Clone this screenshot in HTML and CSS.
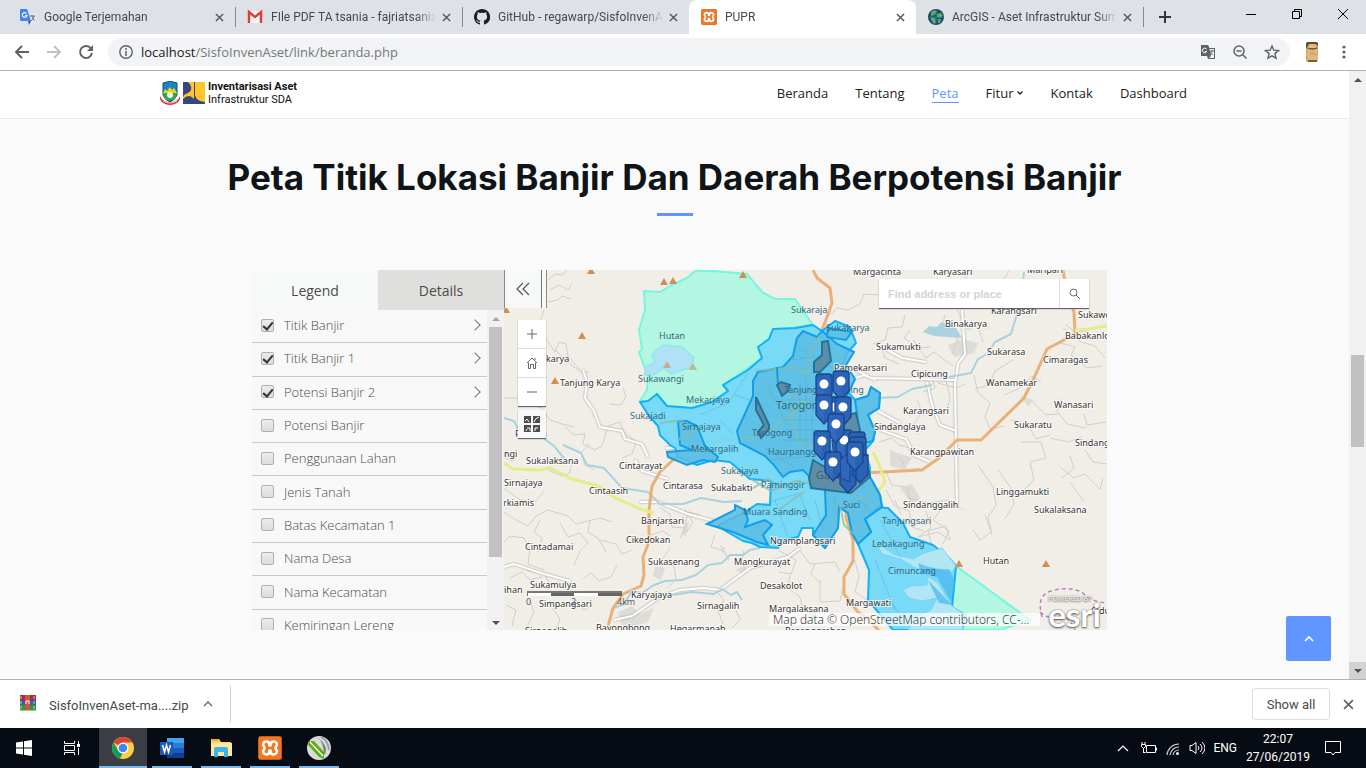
FILE: index.html
```html
<!DOCTYPE html>
<html lang="id">
<head>
<meta charset="utf-8">
<title>PUPR</title>
<link rel="stylesheet" href="styles.css">
</head>
<body>
<svg class="defs" aria-hidden="true">
  <defs>
    <symbol id="x" viewBox="0 0 10 10"><path d="M1 1l8 8M9 1L1 9" fill="none" stroke="currentColor" stroke-width="1.6"/></symbol>
    <symbol id="xampp" viewBox="0 0 24 24"><rect x=".5" y=".5" width="23" height="23" rx="2" fill="#f37623" stroke="#c85a14"/><path d="M8.500 5.500c-3 0-4.500 3-2.500 5q1 1.500 0 3c-2 2-.5 5 2.500 5s3-2 3-4h1c0 2 0 4 3 4s4.500-3 2.500-5q-1-1.500 0-3c2-2 .5-5-2.500-5s-3 2-3 4h-1c0-2 0-4-3-4z" fill="none" stroke="#fff" stroke-width="2.600" stroke-linejoin="round"/></symbol>
    <symbol id="translate" viewBox="0 0 16 16"><path d="M1 1h7l1.500 3H15v11H8l-1-3H1z" fill="#5f6368"/><path d="M9.500 5H14v9H9l2-2z" fill="#f1f3f4"/><path d="M6.500 5a2.300 2.300 0 1 0 .3 2.500H5" fill="none" stroke="#fff"/><path d="M10 7h4M12 6v1c0 2-1 3-2 4m0-3c1 2 2 2 3 3" fill="none" stroke="#5f6368" stroke-width=".9"/></symbol>
    <symbol id="pin" viewBox="0 0 18 32"><path d="M4 1h10q3 0 3 3v17l-8 9-8-9V4q0-3 3-3z" fill="#2a62b4" stroke="#1c448c" stroke-width="1.300"/><path d="M9 14v15l-7-8V5z" fill="#3b75c8" opacity=".45"/><circle cx="9" cy="11" r="4.500" fill="#fff"/></symbol>
    <symbol id="peak" viewBox="0 0 8 7"><path d="M4 0l4 7H0z" fill="#d08f55"/></symbol>
  </defs>
</svg>

<div class="window">
  <header class="tabstrip">
    <div class="tab">
      <svg class="tab-icon" viewBox="0 0 16 16"><path d="M6 4h9q1 0 1 1v10q0 1-1 1h-5z" fill="#e4e6e8"/><path d="M1 0h6l4 12H1q-1 0-1-1V1q0-1 1-1z" fill="#4285f4"/><path d="M8 12h3l-2 4z" fill="#2452b8"/><path d="M6.500 4.500a2.300 2.300 0 1 0 .4 2H5" fill="none" stroke="#fff" stroke-width="1.200"/><path d="M9.500 7H15M12 6v1c1 3 2 4 3 5m-1-5c0 2-2 4-3 5" fill="none" stroke="#697886"/></svg>
      <span class="tab-title">Google Terjemahan</span><button class="tab-close" aria-label="Tutup"><svg><use href="#x"/></svg></button>
    </div>
    <div class="tab sep">
      <svg class="tab-icon" viewBox="0 0 16 16"><path d="M1 2h14v12H1z" fill="#f3f3f3"/><path d="M2 14V3l6 5 6-5v11" fill="none" stroke="#d93f32" stroke-width="2.400"/></svg>
      <span class="tab-title">FIle PDF TA tsania - fajriatsania</span><button class="tab-close" aria-label="Tutup"><svg><use href="#x"/></svg></button>
    </div>
    <div class="tab sep">
      <svg class="tab-icon" viewBox="0 0 16 16"><path d="M8 0C3.600 0 0 3.600 0 8c0 3.500 2.300 6.500 5.500 7.600.4.100.5-.2.500-.4v-1.500c-2.200.5-2.700-.9-2.700-.9-.4-.9-.9-1.200-.9-1.200-.7-.5.100-.5.100-.5.800.1 1.200.8 1.200.8.700 1.200 1.900.9 2.300.7.100-.5.300-.9.500-1.100-1.800-.2-3.600-.9-3.600-4 0-.9.300-1.600.8-2.100-.1-.2-.4-1 .1-2.100 0 0 .7-.2 2.200.8a7.700 7.700 0 0 1 4 0c1.500-1 2.200-.8 2.200-.8.400 1.100.200 1.900.1 2.100.5.600.8 1.300.8 2.100 0 3.100-1.900 3.800-3.700 4 .3.300.6.800.6 1.500v2.200c0 .2.100.5.600.4A8 8 0 0 0 8 0z" fill="#1b1f23"/></svg>
      <span class="tab-title">GitHub - regawarp/SisfoInvenA</span><button class="tab-close" aria-label="Tutup"><svg><use href="#x"/></svg></button>
    </div>
    <div class="tab active">
      <svg class="tab-icon"><use href="#xampp"/></svg>
      <span class="tab-title">PUPR</span><button class="tab-close" aria-label="Tutup"><svg><use href="#x"/></svg></button>
    </div>
    <div class="tab">
      <svg class="tab-icon" viewBox="0 0 16 16"><circle cx="8" cy="8" r="8" fill="#164b6c"/><path d="M3 3l4-2 2 2-3 3-3 1zM9 5l4-1 2 3-3 2-3-1zM3 8l4 1 1 4-2 2-3-4zM10 10l3 0-1 4-2 0z" fill="#69b343"/><path d="M1 8h14M8 1v14M3 4q5 3 10 0M3 12q5-3 10 0" fill="none" stroke="#2e87c2" stroke-width=".7"/></svg>
      <span class="tab-title">ArcGIS - Aset Infrastruktur Sum</span><button class="tab-close" aria-label="Tutup"><svg><use href="#x"/></svg></button>
    </div>
    <button class="new-tab sep" aria-label="Tab baru"><svg viewBox="0 0 12 12"><path d="M6 0v12M0 6h12" stroke="#333639" stroke-width="2"/></svg></button>
    <div class="controls">
      <button aria-label="Minimalkan"><svg viewBox="0 0 12 12"><path d="M1 6.500h10" stroke="#000"/></svg></button>
      <button aria-label="Pulihkan"><svg viewBox="0 0 12 12"><path d="M1.500 3.500h7v7h-7zM3.500 3.500v-2h7v7h-2" fill="none" stroke="#000"/></svg></button>
      <button aria-label="Tutup jendela"><svg viewBox="0 0 12 12"><path d="M1 1l10 10M11 1L1 11" stroke="#000"/></svg></button>
    </div>
  </header>

  <div class="toolbar">
    <button class="tool" aria-label="Kembali"><svg viewBox="0 0 16 16"><path d="M15 8H2M8 2L2 8l6 6" fill="none" stroke="#5f6368" stroke-width="2"/></svg></button>
    <button class="tool" aria-label="Maju"><svg viewBox="0 0 16 16"><path d="M1 8h13M8 2l6 6-6 6" fill="none" stroke="#bfc1c4" stroke-width="2"/></svg></button>
    <button class="tool" aria-label="Muat ulang"><svg viewBox="0 0 16 16"><path d="M13 4.500A6 6 0 1 0 14 9" fill="none" stroke="#5f6368" stroke-width="2"/><path d="M15 1v6H9z" fill="#5f6368"/></svg></button>
    <div class="omnibox">
      <svg class="info" viewBox="0 0 14 14"><circle cx="7" cy="7" r="6.200" fill="none" stroke="#5f6368" stroke-width="1.400"/><path d="M7 6v5M7 3v2" stroke="#5f6368" stroke-width="1.500"/></svg>
      <span class="url"><b>localhost</b>/SisfoInvenAset/link/beranda.php</span>
      <svg class="omni-icon"><use href="#translate"/></svg>
      <svg class="omni-icon" viewBox="0 0 16 16"><circle cx="7" cy="7" r="5" fill="none" stroke="#5f6368" stroke-width="1.500"/><path d="M4.500 7h5M10.500 10.500l4 4" stroke="#5f6368" stroke-width="1.500"/></svg>
      <svg class="omni-icon" viewBox="0 0 16 16"><path d="M8 2l1.800 4.200 4.700.4-3.600 3 1.100 4.600L8 11.800l-4 2.400 1.100-4.600-3.600-3 4.700-.4z" fill="none" stroke="#5f6368" stroke-width="1.400"/></svg>
    </div>
    <svg class="avatar" viewBox="0 0 12 20"><path d="M0 0h12v20H0z" fill="#cfa869"/><path d="M0 0h12v4l-2-2-7 0-3 5z" fill="#5f4b2e"/><path d="M2 8q0-6 4-6t5 6l-1 4-4 3-4-3z" fill="#e3bd88"/><path d="M2 6q4 2 9 0" fill="none" stroke="#5b4030" stroke-width="1.300"/><path d="M3 7q3 6 6 1v5H4z" fill="#d9a077"/><path d="M0 10q5 8 12 2v7H2z" fill="#dcbd78"/><path d="M2 19h9" stroke="#7a5d33" stroke-width="2"/></svg>
    <button class="tool" aria-label="Menu"><svg viewBox="0 0 16 16"><g fill="#5f6368"><circle cx="8" cy="3" r="1.600"/><circle cx="8" cy="8" r="1.600"/><circle cx="8" cy="13" r="1.600"/></g></svg></button>
  </div>

  <div class="viewport">
    <main class="page">
      <div class="navbar">
        <div class="container">
          <a class="brand" href="#">
            <svg class="crest" viewBox="0 0 20 24"><path d="M3 2l4-1 3-1 3 1 4 1v12q-2 5-7 7-5-2-7-7z" fill="#1686c7" stroke="#124c6b"/><path d="M3 12h14l-3-5-2 2-2-3-3 4-2-2z" fill="#f2d21d"/><path d="M3 12h14q0 4-3 7H6q-3-3-3-7z" fill="#36a653"/><circle cx="10" cy="14" r="3" fill="#f6f2ce"/><path d="M0 15q2 6 10 6t10-6q1 4-3 7-7 4-14 0-4-3-3-7z" fill="#d5343b"/><path d="M3 20q7 4 14 0" fill="none" stroke="#fff" stroke-width=".8"/></svg>
            <svg class="pupr" viewBox="0 0 22 22"><path d="M0 0h22v22H0z" fill="#ffc629"/><path d="M0 0h5q7 7 0 11Q1 12 0 15zM11 0h1v13q1 6 10 7v2H11z" fill="#35477b"/><path d="M0 22v-5q6-6 11 0v5z" fill="#35477b"/></svg>
            <span class="brand-text"><b>Inventarisasi Aset</b><br>Infrastruktur SDA</span>
          </a>
          <nav>
            <a href="#">Beranda</a><a href="#">Tentang</a><a class="current" href="#">Peta</a><a href="#">Fitur<svg viewBox="0 0 6 6"><path d="M.5 1.500L3 4l2.500-2.500" fill="none" stroke="#222" stroke-width="1.300"/></svg></a><a href="#">Kontak</a><a href="#">Dashboard</a>
          </nav>
        </div>
      </div>

      <h1>Peta Titik Lokasi Banjir Dan Daerah Berpotensi Banjir</h1>

      <section class="mapapp">
        <aside class="legend">
          <div class="legend-tabs"><button class="on">Legend</button><button>Details</button></div>
          <div class="legend-body">
            <div class="layers">
              <label><input type="checkbox" checked>Titik Banjir<i></i></label>
              <label><input type="checkbox" checked>Titik Banjir 1<i></i></label>
              <label><input type="checkbox" checked>Potensi Banjir 2<i></i></label>
              <label><input type="checkbox">Potensi Banjir</label>
              <label><input type="checkbox">Penggunaan Lahan</label>
              <label><input type="checkbox">Jenis Tanah</label>
              <label><input type="checkbox">Batas Kecamatan 1</label>
              <label><input type="checkbox">Nama Desa</label>
              <label><input type="checkbox">Nama Kecamatan</label>
              <label><input type="checkbox">Kemiringan Lereng</label>
            </div>
            <div class="list-scroll"><svg viewBox="0 0 8 4"><path d="M0 4l4-4 4 4z" fill="#a3a3a3"/></svg><div class="list-thumb"></div><svg viewBox="0 0 8 4"><path d="M0 0l4 4 4-4z" fill="#505050"/></svg></div>
          </div>
        </aside>

        <div class="map">
          <svg class="canvas" viewBox="504 270 603 360" preserveAspectRatio="xMidYMid slice">
            <rect x="504" y="270" width="603" height="360" fill="#f1eee8"/>
            <g fill="#dedcd8">
              <path d="M618 612l14-6 8 8 14-6-6 14-14 4-10 8zM655 566l10 2-4 12-8-4zM684 525l5-4-2 12-6 2zM720 545l5 3-2 6zM890 450l22 8-8 12-14-4zM948 345l14-6 16 4-4 10-20 4zM1020 396l14 4-6 6zM900 488l12-4 8 14-8 6zM504 450l12 8-4 4-8-4zM735 570l12-6-2 10zM806 610l10-3 2 10-8 3z"/>
            </g>
            <g class="minor">
              <path d="M548 280l7-6 8 1 4-6M550 290l9-5 9 5 4-7M548 302l10-2 4-4 9 3M544 310l-4 12 3 12 12 18 4-10 7 2 2 12 12 14M556 350l8 9 10 8 7 5 8 0M504 398h12l14 7 12 3 8 12 12 4 12 3M565 427l9 8 11-1-2 10 12 6 7-4 6-20 12-4 4 10 12 10-4 12-10 4M609 404l12 1 5-9-3-8M548 470l14 6 8-3 2-12M589 444l-8 9 4 12 10 5"/>
              <path d="M504 488l16 12 16 1 8-10M504 512l12 8 12 6 8-10 12-6 20 6 8 8 24-6 12 4M504 542l6-6 14 2 6 12-2 14 16 6M540 520l-6 12 8 6-4 14M560 523l8 14 12-4 8 10-8 8-6 14M590 520l-2 12 10 6 8 14M600 540l16 4 6 10 10-4M617 565l-6 12-12 4-8-8-8 6M510 578l12-6 8 8 12-3M526 570l18 4 6 10M506 605l10 5-4 16M530 600l4 12-7 15M552 607l8 12-4 10M576 600l8 10 9-5"/>
              <path d="M651 535l12-4 7 5M660 508l10 6 2 13 14 1M670 548l-8 12 12 6 2 14-9 8M685 510l8 12-9 14M700 515l-12-3-4 18-4 8M715 535l-4 12 13 4 5 9M744 550l-2 10 8 8 20-3M736 610l4 10-8 8M716 591l8 9-6 11 5 13M778 550l18 10-5 14-12-2M800 551l10 13 25-2 5 10M790 575l-2 13 12 9 4 16M820 580l0 22 20-1 3-14M815 564l-4 10 8 8M854 558l5 18-4 16 12 8"/>
              <path d="M828 316l10-8 10 2 12-6 4-10 16 1M880 302l14 6 15-2M905 315l-3 12-14 1-3 12-12 4M910 330l-6 8 14 10 13-1M899 364l-14-6-3-8M913 340l13 18 8-6 19 14M945 315l-3 12 16 12-6 15M956 308l12 22 14-8 8 7M971 320l8 10 4 12M965 270l2 15 15 9 12-4M1010 270l-10 14-16 6-5 12M1013 295l7 12 12 3 10-4M1066 325l9 7 10-1 14 9M1049 348l12-5 14 4-4 8 16 13 15-2M1063 328l18 14 14 4 10 12"/>
              <path d="M930 372l5 16-12 4M938 383l18 5 9-4M945 377l5 20-3 13-16 5M974 375l4 18 12 10-5 14 5 12 14-3M1013 360l-18 11-6 14-14 4M1004 395l14-6 14-13 9 6M1033 402l13 13 12-1M1011 420l16 3 9 16 14-4M1061 399l-4 12 10 13 19 4M1084 414l3 11 19-3M1021 442l20 0 5 16-16 4 4 18-10 10M1050 438l18 4 14-5M1070 456l4 12-12 10M1085 450l8 12 14 2M882 424l16 6 13-3 8 8M879 442l13-4 7 7 14 4M900 458l7 12 13-2M917 400l5 12-10 15"/>
              <path d="M886 490l9 16 14 5 3 16 12 4M885 470l7 15 15 2 4 18M908 498l21 5 19-3 16 10M926 511l5 17-13 9 20-5 12 8-4-14-18 5 5 20M978 465l15 22 3 18-8 12 4 18M998 470l13 18 3 16-9 15M1060 467l14 11 11-4 15 15 3-10M1070 482l14 20M947 502l-14 18 16 11-6 13M985 515l6 17-11 8-7-10M872 540l13 12 15-5M895 500l6 15M900 548l14 12 20 6"/>
            </g>
            <g class="whiteroad">
              <path d="M583 370l4 12-2 16 9 13 6 16 22 4 3 8 17 5 6 13M504 567l10-3 30 10 26 7M640 502l18 0 30 12 29 8M635 460l7 11 26 8M614 620l18-4 28-19 20-7 24-2 16 2 30-22 38-11 12-9M666 448h18M962 310l3 44-7 10-3 20 2 124M880 346l22 12 24 4M856 370l15 8 50 1 34 1M850 380l14-5 12 5M927 382l5 23 8 20 17 6M880 430l26 9 8 16 16 7M878 411l22 12"/>
            </g>
            <path class="water-line" d="M563 445l18 8 6 12 17 3 18 20 26 4 12 12 23 0 18-6 23 4 18-1M504 418l10 3 8 16 20 0 12 9 13 16M760 548l-10 2-7 5-13 0-8 8-14 2-12 10-14 5-17 1-11 4-12 8-10-2-8 13-10 4M654 593l18 2 20-3 22 2 8-5 9 6 6-3 5 8M1024 272l-2 18 4 14-9 10-6 20-16 8-8 12-9 5-7 14-22 4M876 398l22-1 14-8 20-4"/>
            <path d="M923 332l6-6 8 1 4-5 15 6 6 10-28-2z" fill="#aad3df"/>
            <g class="orange"><path d="M813 270l4 8 13 10 2 15-5 14-7 18-8 12-3 22 0 24M1063 270l4 24 7 18 1 22-28 15-13 29-10 20-43 42h-24l-18 18-17 12-60 3M607 630l6-22 10-14 18-8 3-11-1-18 6-15v-32l3-24 8-14 26-24 18-4 18-4 22 0M846 493l0 24 7 23 0 21-9 16 0 17 14 18 10 7 14 15"/></g>
            <path class="yellow" d="M504 463l9 6 27 1 10-2 22 11 27 7 16 12 28 12 11 3M1107 326l-19 3-13 1M873 452l6 12 6 18-10 14-14 8"/>
            <g fill="none" stroke="#bd80bd" stroke-width="1.500" stroke-dasharray="4 3"><path d="M1042 617q-6-22 9-26 16-5 31 1 9 10 25 11M1040 612q12 10 25 5 6 4 10 13"/></g>

            <g class="greenzone">
              <path d="M644 291l16 1 12-7 15-7 8-7 18 0 34 3 15 18 13 7h20l18 26-5 0-13 4-22 0-4 10-11 8 4 11-39 27 5 6-16 11-20 6-25-2-10-12-9 7h-8l7-11 1-15-4-9-5-14 3-3-3-19 6-20z"/>
              <path d="M956 566l74 54-30 10h-38l3-15-13-8z"/>
            </g>
            <path d="M652 355l11-10 19 2 12 11-4 10-8 2-10 4-9-6-8 6-10 1v-8l10-4z" fill="#b1e1f5" stroke="#91e9ef" stroke-width="2"/>
            <g class="bluezone">
              <path d="M640 402l8-1 9-7 10 12 25 2 20-6 16-11-5-6 25-15 14-12-4-11 11-8 4-10 22-1 18-3 9 6 13-10 15 6 6 16-9 10-5 15v17l13 15 13-4 3-9 9 6-1 15-11 7 7 16-2 10-8 9 5 18v9l10 18 2 12-17 12 6 13-13 12-6-11-4-20-9-6-1 21-13 20-12-13v-7h-11l-4 9-10 2-7 2-3 7-18-1-8-4-9-2-26-15 28-14 12-8 13 1 1-24-21-2-20-17-17-2-16 5-19-8-3-9-5-3-10-10-2-9-9-10z"/>
              <path d="M878 507l10 1 15 15 7 14 23 8 15 12 8 9-4 41 13 8-3 15h-69l-25-30 1-30-11-26 13-12-6-13z"/>
            </g>
            <g fill="#b2e6f5" stroke="#77d6f5"><path d="M876 542l17 12 20 5 11-6 18-5 14 18-4 6-34-3-18-10-18-5zM903 590l8-4 16-1 1-9 10 7 14 23 13 9-3 15h-54l10-14 13-6 6-12-15 3-13-3z"/></g>
            <g fill="#47b5ee" opacity=".7"><path d="M918 563q15 7 31 6l6 13-4 20-14-25-16-4zM928 580l24 25-13-2z"/></g>
            <g class="darkzone">
              <path d="M822 331l-5 6-14-6-6 7-4 18-10 11-25 5-5 9v15l-16 35 3 12 25 13 8 8 10 13 7-5 13-2 7 7 58 0-2-17-12-25-9-35 10-21-9-14 8-13-17-8z"/>
              <path d="M678 421h9l10 5 8 20 13 11-3 5-12-2-16 5-19-8-1-5 25-2-12-5zM707 524l28-14 0-5 10 5 3 10-3 7 20-7 7 5-9 10 5 10-11-3-24-10zM825 490l45-13 10 18 2 12-17 12 6 13-13 12-6-11-4-20-9-6-1 21-13 20-12-13 13-20zM828 328l24 4-6 8-19-3zM855 400l13-4 3-9 9 6-1 15-11 7 7 16-2 10-12 3z"/>
            </g>
            <g class="cityroad"><path d="M755 371l40-4 8 5 9 0M741 437h20l25-19 14-11 10 3M775 375l12 10 4 12M810 403l-15-4-4 20 8 22 15 6M750 490l18-11 13 8M751 479l20 12 25-10 19 3M780 509l25-18M840 505l4 20 10 9M849 493l20 8M678 440l22-13M660 423l24-3M820 335l-10 20-4 16"/></g>
            <g class="cityblock"><path d="M800 380v60M806 376v70M812 390v55M785 392h35M788 400h34M783 410h35M780 420h38M785 430h36M780 440h40M770 460l45-4M765 448l30 20M795 345l14 10M790 360l24-3M765 380l20 40M700 415l28-12M728 403l20-30M735 395l15 5M760 505l40-12M775 500l12 35M800 495l10 25M815 500l8 30M835 495v10M856 495l12 14M880 520l22 40M875 560l20 50M890 600l16 25M720 420l14 15"/></g>
            <path d="M777 367l1 18" fill="none" stroke="#129be8" stroke-width="2"/>
            <g class="grayzone"><path d="M822 342l6-1 3 20-11 11h-6v-10l8-7zM777 385l4-3 9 3-2 6-6 5zM756 397l13 28v4l-8 9-3-6 6-7-8-15zM856 413l4 17-8 12-10-10 5-17zM813 460l17 10 38-2 2 9-19 16-40-5-2-10z"/></g>

            <g>
              <use href="#peak" x="587" y="267" width="8" height="7"/><use href="#peak" x="660" y="278" width="8" height="7"/><use href="#peak" x="669" y="277" width="8" height="7"/><use href="#peak" x="739" y="271" width="8" height="7"/><use href="#peak" x="578" y="332" width="8" height="7"/><use href="#peak" x="551" y="377" width="8" height="7"/><use class="faded" href="#peak" x="663" y="361" width="8" height="7"/><use class="faded" href="#peak" x="689" y="363" width="8" height="7"/><use href="#peak" x="502" y="306" width="8" height="7"/><use href="#peak" x="955" y="560" width="8" height="7"/><use href="#peak" x="1042" y="560" width="8" height="7"/>
            </g>

            <g class="place">
              <text x="853" y="275">Margacinta</text><text x="933" y="275">Karyasari</text><text x="1027" y="273">Maripari</text>
              <text x="991" y="314">Karangsari</text><text x="1078" y="318">Sukawening</text><text x="945" y="327">Binakarya</text><text x="1065" y="339">Babakanloa</text>
              <text x="876" y="350">Sukamukti</text><text x="987" y="355">Sukarasa</text><text x="1043" y="363">Cimaragas</text><text x="911" y="377">Cipicung</text><text x="986" y="386">Wanamekar</text><text x="1054" y="408">Wanasari</text>
              <text x="903" y="414">Karangsari</text><text x="874" y="430">Sindanglaya</text><text x="1014" y="428">Sukaratu</text><text x="1075" y="446">Sindangsari</text><text x="910" y="455">Karangpawitan</text>
              <text x="996" y="495">Linggamukti</text><text x="1034" y="513">Sukalaksana</text><text x="903" y="508">Sindanggalih</text><text x="983" y="564">Hutan</text><text x="1091" y="614">Cidugaleun</text>
              <text x="834" y="371">Pamekarsari</text><text x="546" y="362">karya</text><text x="560" y="386">Tanjung Karya</text>
              <text x="515" y="437">Padaan</text><text x="504" y="457">ngi</text><text x="526" y="464">Sukalaksana</text><text x="504" y="486">Sirnajaya</text><text x="503" y="506">rkiamis</text><text x="619" y="469">Cintarayat</text><text x="589" y="494">Cintaasih</text><text x="663" y="489">Cintarasa</text><text x="711" y="491">Sukabakti</text><text x="641" y="524">Banjarsari</text><text x="626" y="543">Cikedokan</text><text x="525" y="550">Cintadamai</text><text x="648" y="565">Sukasenang</text><text x="734" y="565">Mangkurayat</text><text x="760" y="589">Desakolot</text><text x="530" y="588">Sukamulya</text><text x="504" y="593">ihan</text><text x="539" y="607">Simpangsari</text><text x="631" y="598">Karyajaya</text><text x="697" y="609">Sirnagalih</text><text x="769" y="612">Margalaksana</text><text x="596" y="631">Bayongbong</text><text x="670" y="632">Hegarmanah</text><text x="525" y="634">Sirnagalih</text><text x="785" y="634">Pasanggrahan</text>
              <text x="770" y="544">Ngamplangsari</text><text x="846" y="606">Margawati</text>
            </g>
            <g class="place dim">
              <text x="659" y="339">Hutan</text><text x="638" y="382">Sukawangi</text><text x="630" y="419">Sukajadi</text><text x="791" y="313">Sukaraja</text><text x="826" y="331">Sukakarya</text><text x="686" y="403">Mekarjaya</text><text x="682" y="430">Sirnajaya</text><text x="691" y="452">Mekargalih</text><text x="752" y="436">Tarogong</text><text x="768" y="455">Haurpanggung</text><text x="784" y="393">Tanjung Kamuning</text><text x="721" y="474">Sukajaya</text><text x="761" y="488">Paminggir</text><text x="743" y="515">Muara Sanding</text><text x="843" y="508">Suci</text><text x="882" y="524">Tanjungsari</text><text x="872" y="547">Lebakagung</text><text x="888" y="574">Cimuncang</text>
              <text class="city" x="776" y="409">Tarogong</text><text class="city" x="816" y="479">Garut</text>
            </g>

            <g>
              <use href="#pin" x="815" y="373" width="18" height="32"/><use href="#pin" x="832" y="370" width="18" height="32"/>
              <use href="#pin" x="826" y="396" width="18" height="32"/><use href="#pin" x="815" y="394" width="18" height="32"/><use href="#pin" x="834" y="396" width="18" height="32"/>
              <path d="M832 440l12 8 2 26-10 4z" fill="#2a62b4" stroke="#1c448c"/>
              <use href="#pin" x="835" y="429" width="18" height="32"/><use href="#pin" x="827" y="413" width="18" height="32"/><use href="#pin" x="813" y="430" width="18" height="32"/><use href="#pin" x="848" y="431" width="18" height="32"/><use href="#pin" x="849" y="436" width="18" height="32"/>
              <path d="M840 463h16v21l-8 9-8-9zM853 455h15v20l-8 8-7-8z" fill="#2a62b4" stroke="#1c448c" stroke-width="1.300"/>
              <use href="#pin" x="824" y="451" width="18" height="32"/><path d="M840 460l10-8v30l-9-4z" fill="#2d68bb" stroke="#1c448c"/><use href="#pin" x="846" y="441" width="18" height="32"/>
            </g>

            <g><path d="M527 591h95v5h-95z" fill="#777"/><path d="M528 593h23v3h-23zM574 593h24v3h-24z" fill="#fff"/><path d="M551 593h23v3h-23zM598 593h24v3h-24z" fill="#666"/></g>
            <g class="scale-text"><text x="526" y="605">0</text><text x="571" y="605">2</text><text x="617" y="605">4km</text></g>
          </svg>

          <button class="collapse" aria-label="Sembunyikan panel"><svg viewBox="0 0 14 14"><path d="M7 1L1 7l6 6M13 1L7 7l6 6" fill="none" stroke="#555" stroke-width="1.200"/></svg></button>
          <div class="zoom">
            <button aria-label="Perbesar"><svg viewBox="0 0 12 12"><path d="M6 1v10M1 6h10" stroke="#666"/></svg></button>
            <button aria-label="Awal"><svg viewBox="0 0 12 12"><path d="M2.500 5.500v6h2v-4h3v4h2v-6M1 6l5-5 5 5M9 3V1" fill="none" stroke="#666"/></svg></button>
            <button aria-label="Perkecil"><svg viewBox="0 0 12 12"><path d="M1 6h10" stroke="#666"/></svg></button>
          </div>
          <button class="basemap" aria-label="Peta dasar"><svg viewBox="0 0 16 16"><path d="M0 0h7v7H0zM9 0h7v7H9zM0 9h7v7H0zM9 9h7v7H9z" fill="#4c4c4c"/><path d="M1 5l2-2 2 3M10 6q1-4 5-5M3 13l-1 2M3 12h3v3M11 15v-3h3" fill="none" stroke="#fff"/></svg></button>
          <form class="search"><input type="text" placeholder="Find address or place" aria-label="Find address or place"><button type="button" aria-label="Cari"><svg viewBox="0 0 12 12"><circle cx="4.500" cy="4.500" r="3.500" fill="none" stroke="#666"/><path d="M7 7l4 4" stroke="#666"/></svg></button></form>
          <div class="credit">Map data © OpenStreetMap contributors, CC-BY-SA</div>
          <a class="esri" href="#"><small>POWERED BY</small><b>esri</b></a>
        </div>
      </section>
      <a class="to-top" href="#" aria-label="Ke atas"><svg viewBox="0 0 10 6"><path d="M1 5l4-4 4 4" fill="none" stroke="#fff" stroke-width="1.700"/></svg></a>
    </main>
    <div class="page-scroll">
      <div class="arrow"><svg viewBox="0 0 8 4"><path d="M0 4l4-4 4 4z" fill="#505050"/></svg></div>
      <div class="page-thumb"></div>
      <div class="arrow down"><svg viewBox="0 0 8 4"><path d="M0 0l4 4 4-4z" fill="#505050"/></svg></div>
    </div>
  </div>

  <div class="shelf">
    <button class="download">
      <svg class="rar" viewBox="0 0 16 16"><path d="M0 0h16v5H0z" fill="#a32b48"/><path d="M0 5h16v5H0z" fill="#3d58b8"/><path d="M0 10h16v5.500H0z" fill="#2f9646"/><path d="M1 1v3M1 6v3M1 11v3M14 1v3M14 6v3M14 11v3" stroke="#e9c95a"/><path d="M5 0h5v15H5z" fill="#b9603a"/><path d="M5 4h5v6H5z" fill="#e8473a"/><path d="M6 9V6h3v3" fill="none" stroke="#fff"/></svg>
      <span>SisfoInvenAset-ma....zip</span>
      <svg class="caret" viewBox="0 0 10 6"><path d="M1 5l4-4 4 4" fill="none" stroke="#777" stroke-width="1.600"/></svg>
    </button>
    <button class="show-all">Show all</button>
    <button class="shelf-close" aria-label="Tutup bilah"><svg><use href="#x"/></svg></button>
  </div>

  <footer class="taskbar">
    <button class="task" aria-label="Mulai"><svg viewBox="0 0 16 16"><path d="M0 2.500l7-1v6H0zM8 1.300L16 0v7.500H8zM0 8.500h7v6l-7-1zM8 8.500h8V16l-8-1.300z" fill="#fff"/></svg></button>
    <button class="task view" aria-label="Tampilan tugas"><svg viewBox="0 0 16 16"><path d="M.5 1v2.500h10V1M.5 15v-2.500h10V15M.5 5.500h10v5H.500zM14.500 1v3M14.500 8v7" fill="none" stroke="#fff"/><path d="M13 4h3v3h-3z" fill="#fff"/></svg></button>
    <button class="task run front" aria-label="Chrome"><svg viewBox="0 0 24 24"><circle cx="12" cy="12" r="11" fill="#ffcd40"/><path d="M12 12L2.500 6.500A11 11 0 0 1 21.500 6.500H12z" fill="#db4437"/><path d="M2.500 6.500L7.600 15l4.400 1.500-3 6.100A11 11 0 0 1 2.500 6.500z" fill="#0f9d58"/><circle cx="12" cy="12" r="5.500" fill="#fff"/><circle cx="12" cy="12" r="4.300" fill="#4285f4"/></svg></button>
    <button class="task run word" aria-label="Word"><svg viewBox="0 0 24 24"><path d="M7 2h17v5H7z" fill="#41a5ee"/><path d="M7 7h17v5H7z" fill="#2b7cd3"/><path d="M7 12h17v5H7z" fill="#185abd"/><path d="M7 17h17v5H7z" fill="#103f91"/><path d="M0 6h13v13H0z" fill="#185abd"/><path d="M2.500 9l2 7 2-7 2 7 2-7" fill="none" stroke="#fff" stroke-width="1.500"/></svg></button>
    <button class="task run" aria-label="Explorer"><svg viewBox="0 0 24 24"><path d="M2 3h8l2 3h10v14H2z" fill="#f5d669"/><path d="M2 7h21v13H2z" fill="#ffe89d"/><path d="M5 21v-8q0-2 2-2h10q2 0 2 2v8h-4v-5H9v5z" fill="#3bb4ea"/><path d="M3 4h6" stroke="#f2aa20" stroke-width="2"/></svg></button>
    <button class="task run" aria-label="XAMPP"><svg><use href="#xampp"/></svg></button>
    <button class="task run" aria-label="CorelDRAW"><svg viewBox="0 0 24 24"><circle cx="12" cy="12" r="12" fill="#d9dcda"/><path d="M9 1q8 4 8 18 2-2 2-6-2-8-10-12z" fill="#747976"/><path d="M14 1q7 3 8 13" fill="none" stroke="#9fa3a1" stroke-width="2"/><path d="M2 5l5 0 10 11v7l-5-2L1 9z" fill="#61ad17"/><path d="M3 6l13 14" stroke="#fff" stroke-width="1.200"/></svg></button>
    <div class="tray">
      <svg class="t-up" viewBox="0 0 12 12"><path d="M1 9l5-5 5 5" fill="none" stroke="#fff" stroke-width="1.200"/></svg>
      <svg class="t16" viewBox="0 0 16 16"><path d="M5.500 5.500h9v7h-9zM15.500 7.500v3M2.500 8v5M4.500 12.500h-2M1 2v2M4 2v2M.5 4.500h4v2l-2 2-2-2z" fill="none" stroke="#fff"/></svg>
      <svg class="t16" viewBox="0 0 16 16"><path d="M2 15A12 12 0 0 1 14 4M5 15a9 9 0 0 1 9-8M8 15a6 6 0 0 1 6-5" fill="none" stroke="#d0d0d0" stroke-width="1.200"/><circle cx="12.500" cy="13.500" r="1.500" fill="#fff"/></svg>
      <svg class="t16" viewBox="0 0 16 16"><path d="M1 5.500h2l4-3v11l-4-3H1zM9 6q2 2 0 4M11 4q4 4 0 8M13 2q6 6 0 12" fill="none" stroke="#fff"/></svg>
      <span class="lang">ENG</span>
      <span class="clock">22:07<br>27/06/2019</span>
      <svg class="t16 note" viewBox="0 0 16 16"><path d="M.5 1.500h15v11H10l-2 2.500-2-2.500H.5z" fill="none" stroke="#fff"/></svg>
    </div>
  </footer>
</div>
</body>
</html>
```
FILE: styles.css
```css
* { box-sizing: border-box; }
body { margin: 0; font-family: "Open Sans", "Noto Sans", sans-serif; color: #333; }
button, input { font: inherit; color: inherit; margin: 0; padding: 0; border: 0; background: none; }
svg { display: block; flex: none; }
a { color: inherit; text-decoration: none; }
.defs { position: absolute; width: 0; height: 0; }
.window { display: flex; flex-direction: column; height: 100vh; overflow: hidden; background: #fff; }

/* Tab strip */
.tabstrip { display: flex; flex: none; height: 34px; padding-left: 8px; background: #dee1e6; font: 12px Roboto, sans-serif; }
.tab { display: flex; align-items: center; flex: 0 1 227px; min-width: 0; padding: 0 8px 0 12px; border-radius: 8px 8px 0 0; color: #45494d; }
.tab.active { background: #fff; }
.tab-icon { width: 16px; height: 16px; margin-right: 8px; }
.tab-title { flex: 1; overflow: hidden; white-space: nowrap; -webkit-mask-image: linear-gradient(90deg, #000 88%, transparent); mask-image: linear-gradient(90deg, #000 88%, transparent); }
.tab-close { display: grid; place-items: center; width: 16px; height: 16px; margin-left: 2px; color: #55595d; }
.tab-close svg { width: 9px; height: 9px; }
.sep { background: linear-gradient(#85888c, #85888c) 0 50% / 1px 20px no-repeat; }
.new-tab { display: grid; place-items: center; width: 44px; }
.new-tab svg { width: 12px; height: 12px; }
.controls { display: flex; margin-left: auto; }
.controls button { display: grid; place-items: center; width: 46px; height: 28px; }
.controls svg { width: 12px; height: 12px; }

/* Toolbar */
.toolbar { display: flex; flex: none; align-items: center; height: 37px; padding: 0 6px; border-bottom: 1px solid #b0b0b0; }
.tool { display: grid; place-items: center; width: 32px; height: 32px; }
.tool svg { width: 16px; height: 16px; }
.omnibox { display: flex; flex: 1; align-items: center; gap: 16px; height: 28px; margin: 0 16px 0 6px; padding: 0 10px 0 11px; border-radius: 14px; background: #f1f3f4; font: 13px "Open Sans", sans-serif; color: #74787c; }
.omnibox b { font-weight: 400; color: #202124; }
.info { width: 14px; height: 14px; margin-right: -8px; }
.url { flex: 1; }
.omni-icon { width: 16px; height: 16px; }
.avatar { width: 12px; height: 20px; margin-right: 10px; border-radius: 2px; }

/* Page */
.viewport { display: flex; flex: 1; min-height: 0; border-bottom: 1px solid #b0b0b0; }
.page { position: relative; flex: 1; min-width: 0; overflow: hidden; background: #fafafa; }
.navbar { height: 48px; background: #fff; border-bottom: 1px solid #ececec; }
.container { display: flex; justify-content: space-between; align-items: center; max-width: 1029px; height: 44px; margin: 0 auto; }
.brand { display: flex; align-items: center; gap: 3px; color: #111; font: 11px/13px Roboto, sans-serif; }
.crest { width: 20px; height: 24px; }
.pupr { width: 22px; height: 22px; }
nav { display: flex; gap: 27px; padding-right: 2px; font-size: 13px; line-height: 18px; color: #222; }
nav a { display: flex; align-items: center; gap: 4px; border-bottom: 1px solid transparent; }
nav svg { width: 6px; height: 6px; }
nav .current { color: #6195ff; border-color: #6195ff; }
h1 { margin: 36px 0 54px; text-align: center; white-space: nowrap; font: 700 35px/44px Inter, sans-serif; color: #0e1417; }
h1::after { content: ""; display: block; width: 36px; height: 3px; margin: 14px auto 0; background: #6195ff; }

/* Map application */
.mapapp { display: flex; width: 100%; max-width: 855px; height: 360px; margin: 0 auto; translate: 5px; background: #f7f8f8; }
.legend { display: flex; flex-direction: column; flex: none; width: 252px; color: #4c4c4c; }
.legend-tabs { display: flex; height: 40px; font-size: 14px; color: #4c4c4c; }
.legend-tabs button { flex: 1; background: #dfdfde; }
.legend-tabs .on { background: #f7f9f9; }
.legend-body { display: flex; flex: 1; min-height: 0; overflow: hidden; background: #f8f8f8; }
.layers { display: grid; flex: 1 0 0; grid-auto-rows: 1fr; height: 333px; overflow: hidden; font-size: 13px; font-weight: 300; }
.layers label { display: flex; align-items: center; padding: 0 8px 2px 9px; border-bottom: 1px solid #c9c9c9; }
.layers input { display: grid; place-items: center; appearance: none; width: 13px; height: 13px; margin-right: 10px; border: 1px solid #b0b0b0; border-radius: 2px; background: linear-gradient(#ececec, #dcdcdc); }
.layers input:checked::after { content: ""; width: 4px; height: 8px; border: solid #333; border-width: 0 2px 2px 0; rotate: 40deg; }
.layers i { width: 8px; height: 8px; margin-left: auto; border: solid #777; border-width: 1px 1px 0 0; rotate: 45deg; }
.list-scroll { display: flex; flex-direction: column; align-items: center; width: 17px; padding: 7px 0 5px; background: #f1f1f1; }
.list-scroll svg, .arrow svg { width: 8px; height: 4px; }
.list-thumb { width: 13px; height: 230px; margin: 6px 0 auto; background: #c1c1c1; }
.map { position: relative; flex: 1; min-width: 0; overflow: hidden; }
.canvas { width: 100%; height: 100%; }
.minor { fill: none; stroke: #d2cfcb; stroke-width: 1; stroke-linejoin: round; }
.whiteroad { fill: none; stroke: #fff; stroke-width: 2; filter: drop-shadow(0 0 1px #999); }
.water-line { fill: none; stroke: #a9d2de; stroke-width: 2; stroke-linejoin: bevel; }
.orange { fill: none; stroke: #e9b177; stroke-width: 3; stroke-linejoin: round; }
.yellow { fill: none; stroke: #e6ec86; stroke-width: 3; }
.greenzone { fill: #aef8e1; fill-opacity: .93; stroke: #76f6dc; stroke-width: 2; }
.bluezone { fill: #6fd8f6; fill-opacity: .93; stroke: #12b0f7; stroke-width: 2; stroke-linejoin: round; }
.darkzone { fill: #5cbce3; fill-opacity: .85; stroke: #139fe7; stroke-width: 2; }
.grayzone { fill: #5f8ca6; stroke: #22749c; stroke-width: 2; }
.cityroad { fill: none; stroke: #85bfab; stroke-width: 2; opacity: .8; }
.cityblock { fill: none; stroke: #4a9fc8; stroke-width: 1; opacity: .35; }
.faded { opacity: .6; }
.place { font: 9px "Noto Sans", sans-serif; fill: #333; stroke: #fff; stroke-width: 2px; stroke-opacity: .7; paint-order: stroke; }
.dim { fill: #35687c; stroke: none; }
.dim .city { font-size: 11px; }
.scale-text { font: 9px "Open Sans", sans-serif; fill: #555; }
.collapse { position: absolute; top: 0; left: 0; display: grid; place-items: center; width: 43px; height: 38px; padding-right: 6px; border: solid #888; border-width: 0 1px; background: linear-gradient(90deg, #f7f8f8 36px, #777 36px 37px, #f7f8f8 37px); }
.collapse svg { width: 14px; height: 14px; }
.zoom { position: absolute; top: 50px; left: 14px; display: grid; width: 28px; background: #fff; box-shadow: 0 1px 1px #666; }
.zoom button { display: grid; place-items: center; height: 28px; }
.zoom button + button { height: 29px; border-top: 1px solid #ddd; }
.zoom svg { width: 12px; height: 12px; }
.basemap { position: absolute; top: 140px; left: 14px; display: grid; place-items: center; width: 28px; height: 28px; background: #f7f8f8; box-shadow: 0 1px 1px #666; }
.basemap svg { width: 16px; height: 16px; }
.search { position: absolute; top: 9px; right: 18px; display: flex; width: 210px; height: 29px; background: #fff; box-shadow: 0 1px 1px #666; }
.search input { flex: 1; min-width: 0; padding: 0 9px; font: 11px "Liberation Sans", sans-serif; }
.search input::placeholder { color: #d4d4d4; opacity: 1; font-weight: 700; }
.search button { display: grid; place-items: center; width: 30px; border-left: 1px solid #ddd; }
.search svg { width: 12px; height: 12px; }
.credit { position: absolute; right: 67px; bottom: 4px; width: 271px; padding: 0 6px 0 4px; overflow: hidden; white-space: nowrap; text-overflow: ellipsis; font: 300 12px/13px "Open Sans", sans-serif; color: #222; background: rgba(255, 255, 255, .7); }
.esri { position: absolute; right: 6px; bottom: 4px; display: grid; justify-items: start; color: #fff; text-shadow: 0 1px 2px #555, 0 0 2px #777; }
.esri small { font-size: 7px; line-height: 7px; }
.esri b { font: 700 33px/24px Lato, sans-serif; }
.to-top { position: absolute; right: 18px; bottom: 18px; display: grid; place-items: center; width: 45px; height: 45px; border-radius: 2px; background: #6195ff; }
.to-top svg { width: 10px; height: 6px; }
.page-scroll { display: flex; flex-direction: column; justify-content: space-between; width: 17px; background: #f1f1f1; }
.arrow { display: grid; place-items: center; height: 17px; }
.arrow.down { background: #d2d2d2; }
.page-thumb { width: 13px; height: 92px; margin: 267px auto auto; background: #c1c1c1; }

/* Download shelf */
.shelf { display: flex; flex: none; align-items: center; height: 48px; padding-right: 12px; font: 13px Roboto, sans-serif; color: #45494d; }
.download { display: flex; align-items: center; height: 36px; padding: 0 17px 0 20px; border-right: 1px solid #ccc; }
.download span { padding-top: 3px; }
.rar { width: 16px; height: 16px; margin: 0 13px 2px 0; }
.caret { width: 10px; height: 6px; margin-left: 14px; }
.show-all { width: 78px; height: 32px; margin-left: auto; border: 1px solid #dadce0; border-radius: 4px; }
.shelf-close { display: grid; place-items: center; margin-left: 13px; color: #666; }
.shelf-close svg { width: 11px; height: 11px; }

/* Taskbar */
.taskbar { display: flex; flex: none; height: 40px; background: #070b13; color: #fff; }
.task { display: grid; place-items: center; width: 48px; }
.task svg { width: 16px; height: 16px; }
.view { margin-right: 3px; }
.run { margin-right: 1px; background: linear-gradient(#76b9ed, #76b9ed) 50% 100% / 40px 2px no-repeat; }
.run svg { width: 24px; height: 24px; }
.front { background-color: #3b3e44; background-size: 48px 2px; }
.tray { display: flex; align-items: center; margin-left: auto; padding-right: 25px; font: 12px/18px Roboto, sans-serif; }
.t-up { width: 12px; height: 12px; margin-right: 12px; }
.t16 { width: 16px; height: 16px; margin-right: 8px; }
.lang { margin-right: 9px; }
.clock { width: 64px; margin-right: 15px; text-align: center; }
.note { margin-right: 0; }
```
